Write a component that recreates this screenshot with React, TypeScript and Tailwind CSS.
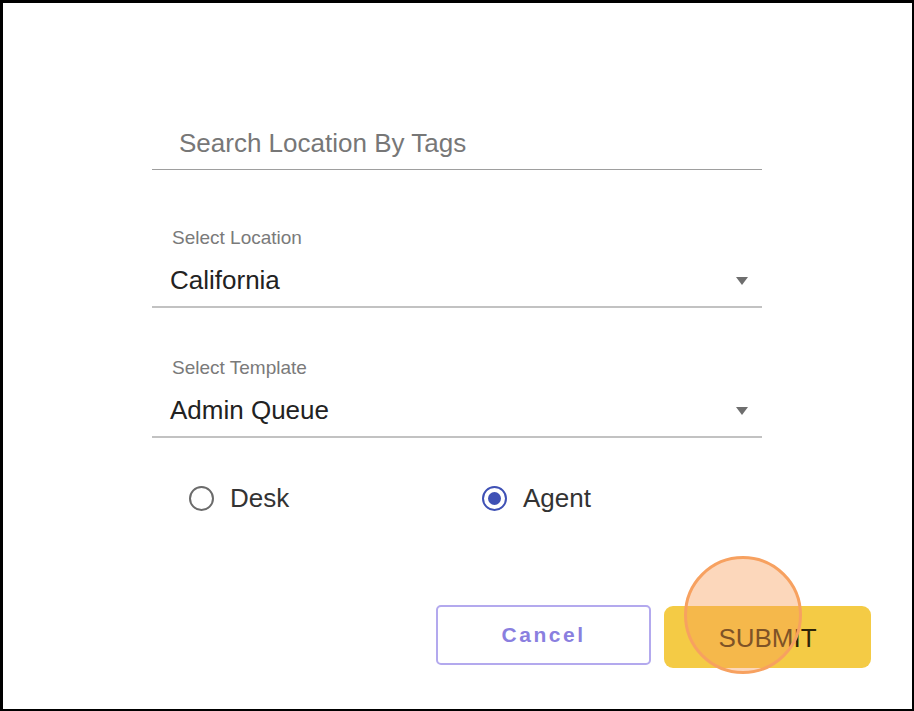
import { useState } from 'react';

type Mode = 'desk' | 'agent';

function Radio({ checked, label, onClick }: { checked: boolean; label: string; onClick: () => void }) {
  return (
    <button onClick={onClick} className="flex items-center gap-[16px]">
      <span
        className={`w-[25px] h-[25px] rounded-full border-2 flex items-center justify-center ${
          checked ? 'border-[#3f51b5]' : 'border-[#6b6b6b]'
        }`}
      >
        {checked && <span className="w-[13px] h-[13px] rounded-full bg-[#3f51b5]" />}
      </span>
      <span className="text-[26px] leading-[28px] text-[#333]">{label}</span>
    </button>
  );
}

function SelectField({ label, value }: { label: string; value: string }) {
  return (
    <div className="border-b-2 border-[#c2c2c2] pb-[12px]">
      <p className="pl-[20px] text-[19px] leading-[20px] text-[#7a7a7a]">{label}</p>
      <div className="mt-[18px] pl-[18px] pr-[14px] flex items-center justify-between">
        <span className="text-[26px] leading-[28px] text-[#222]">{value}</span>
        <svg width="12" height="8" viewBox="0 0 12 8" className="mt-[1px]">
          <path d="M0 0 L12 0 L6 8 Z" fill="#6e6e6e" />
        </svg>
      </div>
    </div>
  );
}

export default function App() {
  const [mode, setMode] = useState<Mode>('agent');

  return (
    <div className="w-[914px] h-[711px] bg-white border-[3px] border-r-2 border-b-2 border-black relative overflow-hidden font-['Liberation_Sans',Arial,sans-serif]">
      <div className="ml-[149px] w-[610px] pt-[126px]">
        {/* Search */}
        <div className="border-b border-[#9e9e9e] pb-[10px] pl-[27px]">
          <span className="text-[26px] leading-[28px] text-[#777]">Search Location By Tags</span>
        </div>

        <div className="mt-[58px]">
          <SelectField label="Select Location" value="California" />
        </div>
        <div className="mt-[50px]">
          <SelectField label="Select Template" value="Admin Queue" />
        </div>

        {/* Type */}
        <div className="mt-[46px] flex items-center pl-[37px]">
          <div className="w-[293px]">
            <Radio checked={mode === 'desk'} label="Desk" onClick={() => setMode('desk')} />
          </div>
          <Radio checked={mode === 'agent'} label="Agent" onClick={() => setMode('agent')} />
        </div>
      </div>

      {/* Actions */}
      <div className="mt-[93px] ml-[433px] flex items-start gap-[13px]">
        <button className="w-[215px] h-[60px] rounded-[5px] border-2 border-[#b3a9ee] text-[#8a7fdf] text-[21px] font-bold tracking-[0.12em]">
          Cancel
        </button>
        <button className="mt-[1px] w-[207px] h-[62px] rounded-[9px] bg-[#f4cb45] text-[#2e2408] text-[26px]">
          <span className="relative top-[1px]">SUBMIT</span>
        </button>
      </div>

      {/* Touch indicator */}
      <div className="absolute left-[681px] top-[553px] w-[118px] h-[118px] rounded-full border-[3px] border-[#f7a160] bg-[#f79a55]/40" />
    </div>
  );
}
